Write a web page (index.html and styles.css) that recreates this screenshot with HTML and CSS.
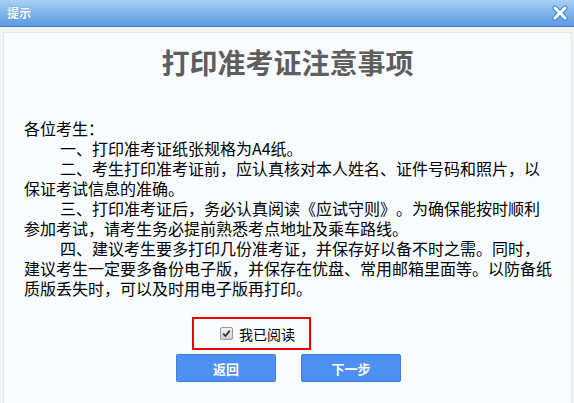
FILE: index.html
```html
<!DOCTYPE html>
<html lang="zh-CN">
<head>
<meta charset="utf-8">
<title>提示</title>
<link rel="stylesheet" href="styles.css">
</head>
<body>
<div class="dialog">
  <div class="titlebar">
    <span class="title">提示</span>
    <span class="close">
      <svg width="16" height="16" viewBox="0 0 16 16">
        <path d="M3 3 L13 13 M13 3 L3 13" stroke="#3f82d0" stroke-width="5" stroke-linecap="round" fill="none"/>
        <path d="M3 3 L13 13 M13 3 L3 13" stroke="#ffffff" stroke-width="3" stroke-linecap="round" fill="none"/>
      </svg>
    </span>
  </div>
  <div class="panel">
    <h1 class="heading">打印准考证注意事项</h1>
    <div class="notice">
      <p class="greet">各位考生：</p>
      <p class="item">一、打印准考证纸张规格为A4纸。</p>
      <p class="item">二、考生打印准考证前，应认真核对本人姓名、证件号码和照片，以保证考试信息的准确。</p>
      <p class="item">三、打印准考证后，务必认真阅读《应试守则》。为确保能按时顺利参加考试，请考生务必提前熟悉考点地址及乘车路线。</p>
      <p class="item">四、建议考生要多打印几份准考证，并保存好以备不时之需。同时，建议考生一定要多备份电子版，并保存在优盘、常用邮箱里面等。以防备纸质版丢失时，可以及时用电子版再打印。</p>
    </div>
    <div class="agree-row">
      <label class="agree">
        <span class="check">
          <svg width="9" height="9" viewBox="0 0 9 9"><path d="M1.2 4.6 L3.5 7 L7.8 1.6" stroke="#333" stroke-width="1.8" fill="none"/></svg>
        </span>
        <span class="agree-text">我已阅读</span>
      </label>
    </div>
    <div class="buttons">
      <button class="btn">返回</button>
      <button class="btn">下一步</button>
    </div>
  </div>
</div>
</body>
</html>
```

FILE: styles.css
```css
html, body {
  margin: 0;
  padding: 0;
}
body {
  width: 574px;
  height: 403px;
  overflow: hidden;
  background: #f3f3f3;
  font-family: "Noto Sans CJK SC", "Noto Sans", sans-serif;
}
.dialog {
  display: flex;
  flex-direction: column;
  height: 403px;
}
.titlebar {
  height: 26px;
  border-bottom: 1px solid #3a7bc8;
  background: linear-gradient(#a6d1f5, #5b9ade);
  display: flex;
  align-items: center;
  justify-content: space-between;
  padding: 0 6px 0 7px;
  flex: none;
}
.title {
  color: #ffffff;
  font-size: 12px;
  font-weight: bold;
  line-height: 14px;
  text-shadow: 0 0 1px #3a7bc8;
}
.close {
  display: flex;
}
.panel {
  flex: 1;
  margin: 5px 2px 0 3px;
  border: 1px solid #e6e6e6;
  border-bottom: none;
  background: #f8fcff;
  display: flex;
  flex-direction: column;
}
.heading {
  margin: 11px 0 0 0;
  text-align: center;
  font-size: 28px;
  line-height: 36px;
  font-weight: bold;
  color: #5e5e5e;
}
.notice {
  margin: 38px 0 0 20px;
  width: 530px;
  font-size: 16px;
  line-height: 20px;
  color: #000;
  text-spacing-trim: space-all;
}
.notice p {
  margin: 0;
}
.item {
  text-indent: 36px;
}
.agree-row {
  margin: 19px 0 0 188px;
  display: flex;
}
.agree {
  height: 29px;
  border: 2px solid #ee0000;
  display: flex;
  align-items: center;
  padding-left: 26px;
  box-sizing: content-box;
  width: 89px;
}
.check {
  width: 11px;
  height: 11px;
  border: 1px solid #9a9a9a;
  border-radius: 2px;
  background: linear-gradient(#f2f2f2, #d0d0d0);
  display: flex;
  align-items: center;
  justify-content: center;
  margin-right: 6px;
}
.agree-text {
  font-size: 14px;
  line-height: 16px;
  color: #000;
}
.buttons {
  margin-top: 4px;
  display: flex;
  justify-content: center;
  gap: 25px;
  padding-left: 2px;
}
.btn {
  width: 100px;
  height: 28px;
  border: 1px solid #3d7fe2;
  border-radius: 2px;
  background: #4d90f2;
  color: #ffffff;
  font-family: "Noto Sans CJK SC", sans-serif;
  font-size: 13px;
  font-weight: bold;
  padding: 0;
}
```
